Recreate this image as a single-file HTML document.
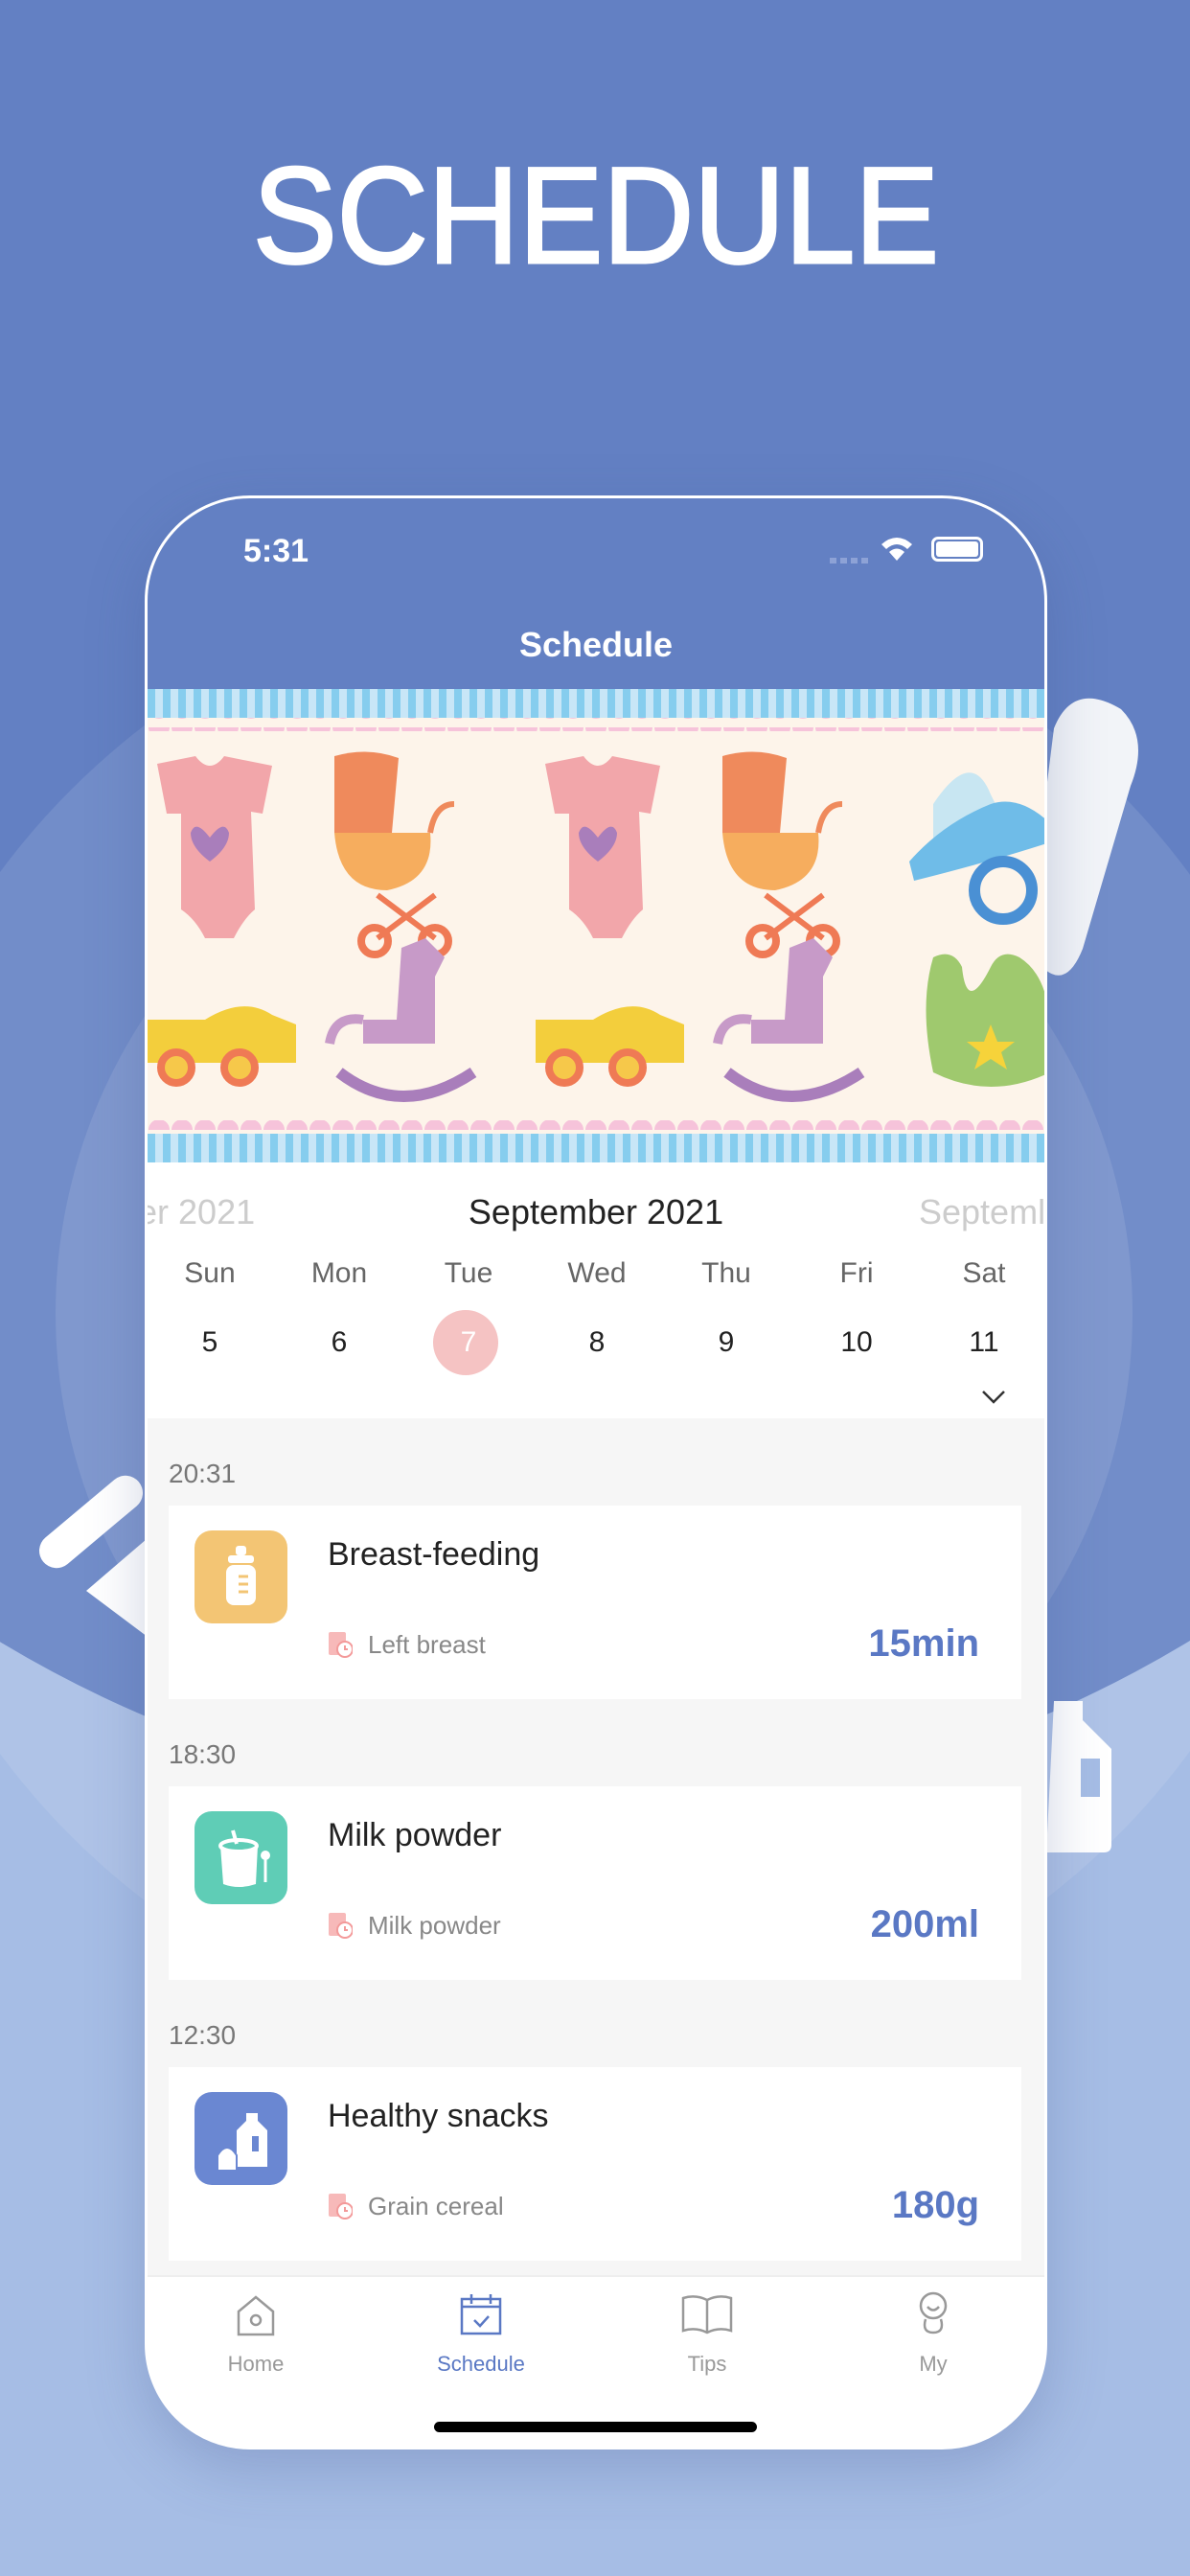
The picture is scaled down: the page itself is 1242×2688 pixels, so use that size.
<!DOCTYPE html>
<html><head><meta charset="utf-8"><style>
*{margin:0;padding:0;box-sizing:border-box}
body{width:1242px;height:2688px;position:relative;overflow:hidden;background:#a6bde5;font-family:"Liberation Sans",sans-serif}
.abs{position:absolute}
.c{border-radius:50%}
.phone{left:151px;top:517px;width:942px;height:2039px;border-radius:110px;overflow:hidden;background:#fff;border:3px solid #fff;box-shadow:0 20px 60px rgba(60,80,140,.25)}
.txt{white-space:nowrap}
.card{left:176px;width:890px;height:202px;background:#fff}
.time{left:176px;font-size:28px;color:#777}
.icon{left:27px;top:26px;width:97px;height:97px;border-radius:18px}
.ttl{left:166px;top:32px;font-size:34px;color:#222}
.sub{left:208px;top:130px;font-size:26px;color:#888}
.pk{left:166px;top:131px;width:26px;height:28px}
.val{right:44px;top:122px;font-size:40px;font-weight:bold;color:#5a78c4}
.tab{width:200px;text-align:center;font-size:22px;color:#999;top:2454px}
</style></head><body>
<div class="abs c" style="left:-579px;top:-512px;width:2398px;height:2398px;background:#6380c3"></div>
<div class="abs" style="left:0;top:0;width:1242px;height:700px;background:#6380c3"></div>
<div class="abs c" style="left:-152px;top:598px;width:1544px;height:1544px;background:rgba(255,255,255,.1)"></div>
<div class="abs c" style="left:58px;top:808px;width:1124px;height:1124px;background:rgba(255,255,255,.1)"></div>

<svg class="abs" style="left:0;top:150px" width="1242" height="140"><text x="264" y="124" textLength="716" lengthAdjust="spacingAndGlyphs" font-family="Liberation Sans" font-size="143" fill="#fff" stroke="#fff" stroke-width="3">SCHEDULE</text></svg>

<!-- decorations -->
<svg class="abs" style="left:1060px;top:720px" width="140" height="360"><path d="M40 40 Q60 -10 110 20 Q140 50 120 100 L70 270 Q50 320 20 280 L30 120 Z" fill="#f2f4f8"/></svg>
<svg class="abs" style="left:20px;top:1530px" width="150" height="210"><rect x="10" y="40" width="130" height="36" rx="18" transform="rotate(-40 75 58)" fill="#fff"/><path d="M70 130 L140 70 L150 190 Z" fill="#fff"/></svg>
<svg class="abs" style="left:1080px;top:1775px" width="100" height="160"><path d="M20 0 h30 v20 l30 30 v100 q0 8 -8 8 h-60 z" fill="#fff"/><rect x="48" y="60" width="20" height="40" fill="#a6bde5"/></svg>

<div class="abs phone">
 <div class="abs" style="left:0;top:0;width:942px;height:202px;background:#6380c3"></div>
 <div class="abs txt" style="left:100px;top:36px;font-size:34px;color:#fff;font-weight:bold">5:31</div>
 <div class="abs" style="left:712px;top:62px;width:44px;height:6px;background:repeating-linear-gradient(90deg,#8da2d6 0 7px,transparent 7px 11px)"></div>
 <svg class="abs" style="left:764px;top:38px" width="36" height="28"><path d="M2 10 Q18 -4 34 10 L29 15 Q18 5 7 15Z M10 18 Q18 11 26 18 L18 27Z" fill="#fff"/></svg>
 <div class="abs" style="left:818px;top:40px;width:54px;height:26px;border:3px solid #fff;border-radius:7px;padding:2px"><div style="width:100%;height:100%;background:#fff;border-radius:3px"></div></div>
 <div class="abs txt" style="left:0;width:936px;text-align:center;top:132px;font-size:36px;color:#fff;font-weight:bold">Schedule</div>
 <!-- banner -->
 <svg class="abs" style="left:0;top:199px" width="942" height="494">
  <rect width="942" height="494" fill="#fdf4ea"/>
  <defs><pattern id="st" width="16" height="30" patternUnits="userSpaceOnUse"><rect width="16" height="30" fill="#c8e6f7"/><rect width="8" height="30" fill="#86cdee"/></pattern>
  <pattern id="sc" width="24" height="20" patternUnits="userSpaceOnUse"><circle cx="12" cy="0" r="11" fill="#f6c3da"/></pattern>
  <pattern id="sc2" width="24" height="20" patternUnits="userSpaceOnUse"><circle cx="12" cy="20" r="11" fill="#f6c3da"/></pattern></defs>
  <rect y="0" width="942" height="30" fill="url(#st)"/><rect y="30" width="942" height="14" fill="url(#sc)"/>
  <rect y="450" width="942" height="14" fill="url(#sc2)"/><rect y="464" width="942" height="30" fill="url(#st)"/>
  <g id="row">
   <path d="M10 78 L50 70 Q65 90 80 70 L130 80 L120 130 L108 128 L112 230 Q100 240 90 260 L60 260 Q50 240 35 230 L35 130 L20 130Z" fill="#f2a6aa"/>
   <path d="M65 155 Q50 135 45 150 Q45 165 65 180 Q85 165 85 150 Q80 135 65 155Z" fill="#a97ebb"/>
   <path d="M195 70 Q230 60 262 72 L255 150 L195 150Z" fill="#ef8a5c"/>
   <path d="M195 150 L295 150 Q300 200 250 210 Q200 210 195 150Z" fill="#f6ad5e"/>
   <path d="M295 150 Q300 120 320 120" stroke="#ef8a5c" stroke-width="6" fill="none"/>
   <circle cx="237" cy="263" r="14" fill="none" stroke="#ef7a55" stroke-width="8"/><circle cx="300" cy="263" r="14" fill="none" stroke="#ef7a55" stroke-width="8"/>
   <path d="M240 215 L300 260 M300 215 L240 260" stroke="#ef7a55" stroke-width="6"/>
   <path d="M0 345 L60 345 Q100 320 130 340 L155 350 L155 390 L0 390Z" fill="#f3ce3c"/>
   <circle cx="30" cy="395" r="16" fill="#f6c84a" stroke="#ef7a55" stroke-width="8"/><circle cx="96" cy="395" r="16" fill="#f6c84a" stroke="#ef7a55" stroke-width="8"/>
   <path d="M225 345 L260 345 L265 270 L290 260 L310 280 L300 300 L300 370 L225 370Z" fill="#c79ac8"/>
   <path d="M225 345 Q195 340 190 370" stroke="#c79ac8" stroke-width="10" fill="none"/>
   <path d="M200 400 Q265 450 340 400" stroke="#a97ebb" stroke-width="12" fill="none"/>
  </g>
  <use href="#row" x="405"/>
  <path d="M820 120 Q860 60 880 110 L900 150 Q860 170 820 160Z" fill="#c8e6f2"/>
  <path d="M795 180 Q830 140 880 120 Q910 110 942 140 L942 160 Q880 180 800 200Z" fill="#6fbce8"/>
  <circle cx="893" cy="210" r="30" fill="none" stroke="#4a90d4" stroke-width="12"/>
  <path d="M820 280 Q840 270 850 290 Q855 340 880 290 Q890 270 910 280 Q942 300 942 360 L942 400 Q880 430 820 400 Q805 330 820 280Z" fill="#9fc96e"/>
  <path d="M880 350 l7 18 h18 l-14 11 6 18 -17 -11 -17 11 6 -18 -14 -11 h18z" fill="#f6d33a"/>
 </svg>
 <!-- calendar -->
 <div class="abs txt" style="left:0;width:936px;text-align:center;top:724px;font-size:36px;color:#222">September 2021</div>
 <div class="abs txt" style="left:-30px;top:724px;font-size:36px;color:#ccc">ber 2021</div>
 <div class="abs txt" style="left:805px;top:724px;font-size:36px;color:#ccc">Septeml</div>
 <div class="abs" style="left:0;top:792px;width:942px;font-size:30px;color:#666">
  <span class="abs" style="left:15px;width:100px;text-align:center">Sun</span><span class="abs" style="left:150px;width:100px;text-align:center">Mon</span><span class="abs" style="left:285px;width:100px;text-align:center">Tue</span><span class="abs" style="left:419px;width:100px;text-align:center">Wed</span><span class="abs" style="left:554px;width:100px;text-align:center">Thu</span><span class="abs" style="left:690px;width:100px;text-align:center">Fri</span><span class="abs" style="left:823px;width:100px;text-align:center">Sat</span>
 </div>
 <div class="abs c" style="left:298px;top:847px;width:68px;height:68px;background:#f5c3c3"></div>
 <div class="abs" style="left:0;top:864px;width:942px;font-size:30px;color:#222">
  <span class="abs" style="left:15px;width:100px;text-align:center">5</span><span class="abs" style="left:150px;width:100px;text-align:center">6</span><span class="abs" style="left:285px;width:100px;text-align:center;color:#fff">7</span><span class="abs" style="left:419px;width:100px;text-align:center">8</span><span class="abs" style="left:554px;width:100px;text-align:center">9</span><span class="abs" style="left:690px;width:100px;text-align:center">10</span><span class="abs" style="left:823px;width:100px;text-align:center">11</span>
 </div>
 <svg class="abs" style="left:870px;top:930px" width="26" height="16"><path d="M2 2 L13 13 L24 2" stroke="#333" stroke-width="2.5" fill="none"/></svg>
 <div class="abs" style="left:0;top:960px;width:942px;height:894px;background:#f6f6f6"></div>
 <div class="abs" style="left:0;top:1854px;width:942px;height:2px;background:#eee"></div>
</div>

<!-- list (page coords) -->
<div class="abs txt time" style="top:1522px">20:31</div>
<div class="abs card" style="top:1571px">
 <div class="abs icon" style="background:#f3c574"><svg width="97" height="97"><rect x="43" y="16" width="11" height="10" rx="3" fill="#fff"/><rect x="35" y="26" width="27" height="8" rx="3" fill="#fff"/><rect x="33" y="36" width="31" height="42" rx="8" fill="#fff"/><path d="M46 48h10M46 56h10M46 64h10" stroke="#f3c574" stroke-width="3"/></svg></div>
 <div class="abs txt ttl">Breast-feeding</div>
 <svg class="abs pk" viewBox="0 0 26 28"><rect x="1" y="1" width="18" height="24" rx="2" fill="#f7b9b9"/><circle cx="18" cy="19" r="8" fill="#fff" stroke="#f39a9a" stroke-width="2"/><path d="M18 15v4h3" stroke="#f39a9a" stroke-width="2" fill="none"/></svg>
 <div class="abs txt sub">Left breast</div><div class="abs txt val">15min</div>
</div>
<div class="abs txt time" style="top:1815px">18:30</div>
<div class="abs card" style="top:1864px">
 <div class="abs icon" style="background:#5fcdb6"><svg width="97" height="97"><path d="M27 36 Q48 26 66 36 L64 76 Q46 82 30 76Z" fill="#fff"/><ellipse cx="46" cy="36" rx="19" ry="6" fill="#5fcdb6" stroke="#fff" stroke-width="4"/><path d="M40 20 L44 34" stroke="#fff" stroke-width="4"/><circle cx="74" cy="46" r="5" fill="#fff"/><path d="M74 50v24" stroke="#fff" stroke-width="3"/></svg></div>
 <div class="abs txt ttl">Milk powder</div>
 <svg class="abs pk" viewBox="0 0 26 28"><rect x="1" y="1" width="18" height="24" rx="2" fill="#f7b9b9"/><circle cx="18" cy="19" r="8" fill="#fff" stroke="#f39a9a" stroke-width="2"/><path d="M18 15v4h3" stroke="#f39a9a" stroke-width="2" fill="none"/></svg>
 <div class="abs txt sub">Milk powder</div><div class="abs txt val">200ml</div>
</div>
<div class="abs txt time" style="top:2108px">12:30</div>
<div class="abs card" style="top:2157px">
 <div class="abs icon" style="background:#6a87d2"><svg width="97" height="97"><path d="M54 22h12v8l10 10v38H44V40l10-10z" fill="#fff"/><rect x="60" y="46" width="7" height="16" fill="#6a87d2"/><path d="M24 66 Q34 50 44 66 L44 82 H24Z" fill="#fff" stroke="#6a87d2" stroke-width="2"/></svg></div>
 <div class="abs txt ttl">Healthy snacks</div>
 <svg class="abs pk" viewBox="0 0 26 28"><rect x="1" y="1" width="18" height="24" rx="2" fill="#f7b9b9"/><circle cx="18" cy="19" r="8" fill="#fff" stroke="#f39a9a" stroke-width="2"/><path d="M18 15v4h3" stroke="#f39a9a" stroke-width="2" fill="none"/></svg>
 <div class="abs txt sub">Grain cereal</div><div class="abs txt val">180g</div>
</div>

<!-- tab bar -->
<svg class="abs" style="left:243px;top:2392px" width="48" height="48"><path d="M6 20 L24 5 L42 20 V44 H6Z" fill="none" stroke="#999" stroke-width="2.5"/><circle cx="24" cy="29" r="5" fill="none" stroke="#999" stroke-width="2.5"/></svg>
<svg class="abs" style="left:478px;top:2390px" width="48" height="50"><rect x="4" y="9" width="40" height="36" fill="none" stroke="#5a78c4" stroke-width="2.5"/><path d="M4 17h40M14 4v10M34 4v10M17 31l6 6 9-10" stroke="#5a78c4" stroke-width="2.5" fill="none"/></svg>
<svg class="abs" style="left:710px;top:2392px" width="56" height="46"><path d="M28 8 Q16 2 3 6 V40 Q16 36 28 42 Q40 36 53 40 V6 Q40 2 28 8Z M28 8V42" fill="none" stroke="#999" stroke-width="2.5"/></svg>
<svg class="abs" style="left:954px;top:2390px" width="40" height="50"><circle cx="20" cy="16" r="13" fill="none" stroke="#999" stroke-width="2.5"/><path d="M14 17 Q20 24 26 17" stroke="#999" stroke-width="2.5" fill="none"/><path d="M12 30 Q8 44 20 44 Q32 44 28 30" stroke="#999" stroke-width="2.5" fill="none"/></svg>
<div class="abs tab" style="left:167px">Home</div>
<div class="abs tab" style="left:402px;color:#5a78c4">Schedule</div>
<div class="abs tab" style="left:638px">Tips</div>
<div class="abs tab" style="left:874px">My</div>
<div class="abs" style="left:453px;top:2527px;width:337px;height:11px;border-radius:6px;background:#000"></div>
</body></html>
